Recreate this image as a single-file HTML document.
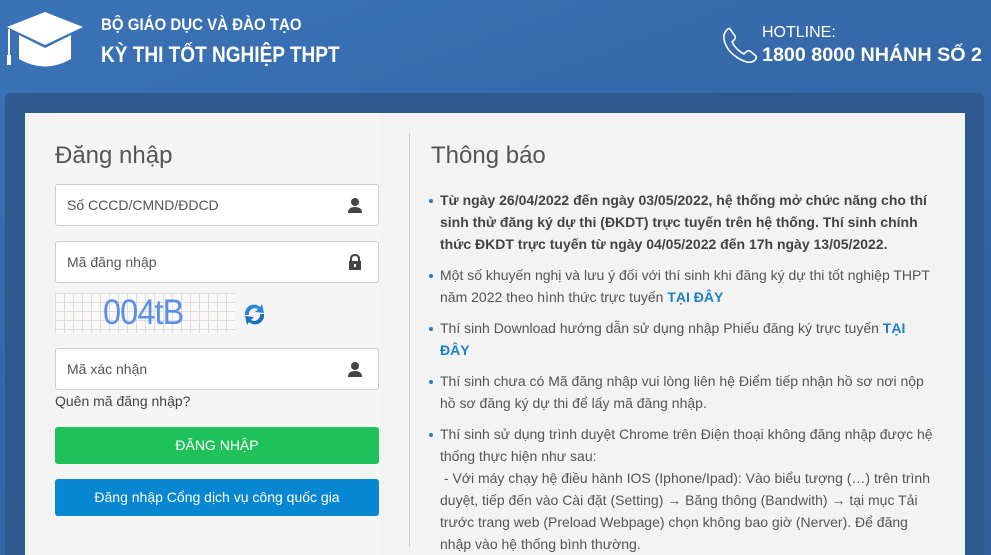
<!DOCTYPE html>
<html><head><meta charset="utf-8"><style>
*{margin:0;padding:0;box-sizing:border-box}
html,body{width:991px;height:555px;overflow:hidden}
body{font-family:"Liberation Sans",Arial,sans-serif;background:linear-gradient(160deg,#3b73b8 0%,#3569aa 40%,#2f5f9c 100%);position:relative}
.hdr1{position:absolute;left:101px;top:15px;color:#fff;font-weight:bold;font-size:17px;transform:scaleX(0.885);transform-origin:left;white-space:nowrap}
.hdr2{position:absolute;left:101px;top:42px;color:#fff;font-weight:bold;font-size:22px;transform:scaleX(0.865);transform-origin:left;white-space:nowrap}
.hot1{position:absolute;left:762px;top:24px;color:#fff;font-size:16px}
.hot2{position:absolute;left:762px;top:44px;color:#fff;font-size:19.7px;font-weight:bold;white-space:nowrap}
.dark{position:absolute;left:5px;top:93px;width:979px;height:462px;background:#2d5a8f;border-radius:6px 6px 0 0}
.inner{position:absolute;left:25px;top:113px;width:940px;height:442px;background:#f3f3f3}
.left{position:absolute;left:55px;top:113px;width:325px;height:442px;background:#f5f5f5}
.div{position:absolute;left:409px;top:133px;width:1px;height:414px;background:#ccc}
h2{position:absolute;font-weight:normal;font-size:24px;color:#555}
.inp{position:absolute;left:55px;width:324px;height:42px;background:#fff;border:1px solid #ccc;border-radius:3px;font-size:14px;color:#555;padding:12px 0 0 11px}
.inp svg{position:absolute;right:15px;top:12px}
.btn{position:absolute;left:55px;width:324px;height:37px;border-radius:3px;color:#fff;font-size:14px;text-align:center;line-height:36px}
ul{position:absolute;left:440px;top:189px;width:520px;list-style:none;font-size:14px;line-height:22px;color:#555;white-space:nowrap}
li{position:relative;margin-bottom:9px}
li:before{content:"";position:absolute;left:-11px;top:10px;width:4px;height:4px;border-radius:2px;background:#2a7bc0}
b{color:#444}
a{color:#1a7fcf;font-weight:bold;text-decoration:none}
</style></head><body>
<svg style="position:absolute;left:5px;top:12px" width="80" height="58" viewBox="0 0 80 58"><path d="M40 0 L78 15 L40 33 L2 15 Z" fill="#fff"/><path d="M14 23 L40 36 L66 23 L66 47 Q40 62 14 47 Z" fill="#fff"/><path d="M4 17 L4 45" stroke="#fff" stroke-width="2"/><rect x="2" y="43" width="4" height="10" fill="#fff"/></svg>
<div class="hdr1">BỘ GIÁO DỤC VÀ ĐÀO TẠO</div>
<div class="hdr2">KỲ THI TỐT NGHIỆP THPT</div>
<svg style="position:absolute;left:722px;top:27px" width="36" height="36" viewBox="0 0 36 36"><path d="M8 2 L13 9 Q14 11 12 13 L10 15 Q14 23 22 27 L24 25 Q26 23 28 24 L34 29 Q35 31 33 33 Q30 36 25 35 Q14 32 6 22 Q1 14 2 8 Q3 4 6 2 Q7 1 8 2 Z" fill="none" stroke="#fff" stroke-width="1.6"/></svg>
<div class="hot1">HOTLINE:</div>
<div class="hot2">1800 8000 NHÁNH SỐ 2</div>
<div class="dark"></div>
<div class="inner"></div>
<div class="left"></div>
<div class="div"></div>
<h2 style="left:55px;top:142px">Đăng nhập</h2>
<div class="inp" style="top:184px">Số CCCD/CMND/ĐDCD<svg width="16" height="16" viewBox="0 0 16 16"><circle cx="8" cy="5" r="4" fill="#444"/><path d="M1 16 Q1 10 8 10 Q15 10 15 16Z" fill="#444"/></svg></div>
<div class="inp" style="top:241px">Mã đăng nhập<svg width="16" height="16" viewBox="0 0 16 16"><path d="M4 8 V5 Q4 1 8 1 Q12 1 12 5 V8" fill="none" stroke="#444" stroke-width="2"/><rect x="2" y="7" width="12" height="9" fill="#444"/><rect x="7" y="10" width="2" height="3" fill="#fff"/></svg></div>
<div style="position:absolute;left:55px;top:293px;width:180px;height:40px;background:#fbf8f8;background-image:linear-gradient(#ddd 1px,transparent 1px),linear-gradient(90deg,#ddd 1px,transparent 1px);background-size:9px 9px"></div>
<div style="position:absolute;left:103px;top:293px;font-size:35px;color:#5a8fe6;letter-spacing:-1px;transform:scaleX(0.93);transform-origin:left">004tB</div>
<svg style="position:absolute;left:240px;top:301px" width="29" height="27" viewBox="0 0 29 27"><path d="M5 14 A9 9 0 0 1 20 6 L22 3 L24 12 L15 11 L18 8 A6 6 0 0 0 9 14 Z" fill="#2a86d6"/><path d="M24 13 A9 9 0 0 1 9 21 L7 24 L5 15 L14 16 L11 19 A6 6 0 0 0 20 13 Z" fill="#1f6fc0"/></svg>
<div class="inp" style="top:348px">Mã xác nhận<svg width="16" height="16" viewBox="0 0 16 16"><circle cx="8" cy="5" r="4" fill="#444"/><path d="M1 16 Q1 10 8 10 Q15 10 15 16Z" fill="#444"/></svg></div>
<div style="position:absolute;left:55px;top:393px;font-size:14px;color:#444">Quên mã đăng nhập?</div>
<div class="btn" style="top:427px;background:#1fc25a">ĐĂNG NHẬP</div>
<div class="btn" style="top:479px;background:#0787d1">Đăng nhập Cổng dịch vụ công quốc gia</div>
<h2 style="left:431px;top:142px">Thông báo</h2>
<ul>
<li><b>Từ ngày 26/04/2022 đến ngày 03/05/2022, hệ thống mở chức năng cho thí<br>sinh thử đăng ký dự thi (ĐKDT) trực tuyến trên hệ thống. Thí sinh chính<br>thức ĐKDT trực tuyến từ ngày 04/05/2022 đến 17h ngày 13/05/2022.</b></li>
<li>Một số khuyến nghị và lưu ý đối với thí sinh khi đăng ký dự thi tốt nghiệp THPT<br>năm 2022 theo hình thức trực tuyến <a>TẠI ĐÂY</a></li>
<li>Thí sinh Download hướng dẫn sử dụng nhập Phiếu đăng ký trực tuyến <a>TẠI<br>ĐÂY</a></li>
<li>Thí sinh chưa có Mã đăng nhập vui lòng liên hệ Điểm tiếp nhận hồ sơ nơi nộp<br>hồ sơ đăng ký dự thi để lấy mã đăng nhập.</li>
<li>Thí sinh sử dụng trình duyệt Chrome trên Điện thoại không đăng nhập được hệ<br>thống thực hiện như sau:<br>&nbsp;- Với máy chạy hệ điều hành IOS (Iphone/Ipad): Vào biểu tượng (…) trên trình<br>duyệt, tiếp đến vào Cài đặt (Setting) → Băng thông (Bandwith) → tại mục Tải<br>trước trang web (Preload Webpage) chọn không bao giờ (Nerver). Để đăng<br>nhập vào hệ thống bình thường.</li>
</ul>
</body></html>
